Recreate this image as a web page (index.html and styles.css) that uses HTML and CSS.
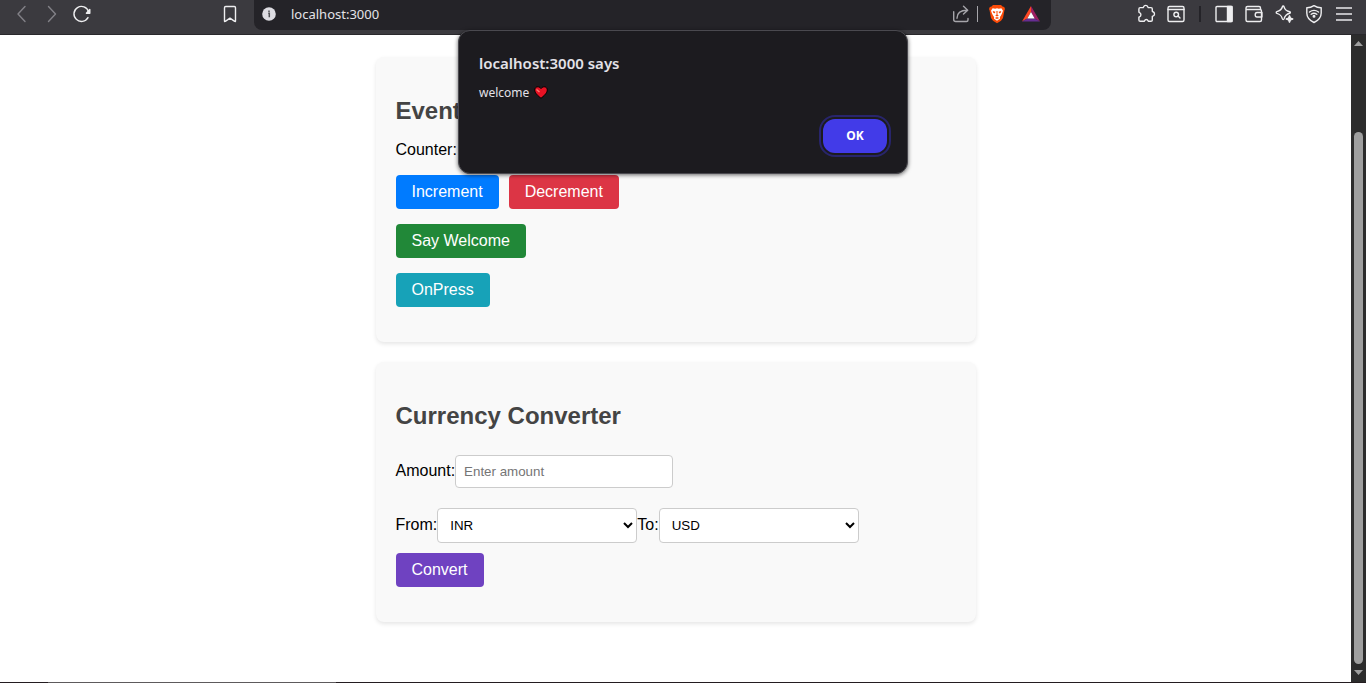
FILE: index.html
```html
<!DOCTYPE html>
<html lang="en">
<head>
<meta charset="utf-8">
<title>localhost:3000</title>
<link rel="stylesheet" href="styles.css">
</head>
<body>
<header class="toolbar">
  <div class="nav-group">
    <button class="tool dim" aria-label="Back"><svg width="20" height="20" viewBox="0 0 20 20"><path d="M13 2.500 6 10l7 7.500"/></svg></button>
    <button class="tool dim" aria-label="Forward"><svg width="20" height="20" viewBox="0 0 20 20"><path d="m6.500 2.500 7 7.500-7 7.500"/></svg></button>
    <button class="tool" aria-label="Reload"><svg width="20" height="20" viewBox="0 0 20 20"><path d="M16 13.600A7.500 7.500 0 1 1 16.600 7.600"/><path class="fill" d="M17.800 5.500v3.700h-3.400z"/></svg></button>
    <button class="tool bookmark" aria-label="Bookmark"><svg width="20" height="20" viewBox="0 0 20 20"><path d="M5.700 2.500h8.600q1.200 0 1.200 1.200v13.200q0 1-.8.400L10 14.200l-4.700 3.100q-.8.600-.8-.4V3.700q0-1.200 1.200-1.200z"/></svg></button>
  </div>
  <div class="address">
    <svg class="info" width="14" height="14" viewBox="0 0 14 14"><circle cx="7" cy="7" r="6.800" fill="#dddce2"/><path d="M6.200 6.200h1.100v4M7 3.500v1.400" stroke="#505055" stroke-width="1.500" fill="none"/></svg>
    <span class="url">localhost:3000</span>
    <button class="tool share" aria-label="Share"><svg width="20" height="20" viewBox="0 0 20 20"><path d="M2.700 7.800v7.700q0 2 2 2h10.800q1.500 0 1.500-1.500v-1.500M6 14.200c0-5 2.500-8 10.200-8M12.500 2.300l4.200 3.900-4.200 3.900"/></svg></button>
    <span class="divider"></span>
    <button class="tool" aria-label="Shields"><svg width="20" height="20" viewBox="0 0 20 20"><path class="solid" fill="#fb4b08" d="m6 1-1.500 1.500-1.700.5-.8 2 .6 1.500L4 14l2 2.700 4 2.600 4-2.600 2-2.700 1.400-7.500L18 5l-.8-2-1.700-.5L14 1z"/><path class="solid" fill="#fff" d="m5.600 4.300 2.600.5L10 4.200l1.800.6 2.600-.5 1.600 2.500-1.100 3-1.200 2.300-.8 1 .1 1.600-3 2-3-2 .1-1.600-.8-1-1.200-2.300-1.100-3z"/><path class="solid" fill="#fb4b08" d="m5.700 7 2.700.8-.5 1.500-1.500-.4zm8.600 0-2.700.8.500 1.500 1.500-.4zM9.400 7h1.200l-.2 3.400 1.400 1-1.800 1.200-1.800-1.200 1.400-1zM7.800 14l2.200-1 2.200 1-2.200 1z"/></svg></button>
    <button class="tool rewards" aria-label="Rewards"><svg width="20" height="20" viewBox="0 0 20 20"><path class="solid" fill="#ff4724" d="M10 2 1 17.500l5.300-3L10 8z"/><path class="solid" fill="#9e1f63" d="m10 2 9 15.500-5.300-3L10 8z"/><path class="solid" fill="#662d91" d="M1 17.500h18l-5.300-3.100H6.300z"/><path class="solid" fill="#fff" d="m10 8-3.700 6.400h7.400z"/></svg></button>
  </div>
  <div class="actions">
    <button class="tool" aria-label="Extensions"><svg width="20" height="20" viewBox="0 0 20 20"><path d="M4.200 3.600h3c.5-.3.300-2.200 2.500-2.200s2 1.900 2.500 2.200h2.800q1.300 0 1.300 1.300v2.500c.3.500 2.200.3 2.200 2.500s-1.900 2-2.200 2.500v3.500q0 1.300-1.300 1.300h-2.700c-.4-.3-.2-1.700-2-1.700s-1.600 1.400-2 1.700H4.200q-1.300 0-1.300-1.300v-2.700c.3-.5 2-.3 2-2.500s-1.700-2-2-2.500V4.900q0-1.300 1.300-1.300z"/></svg></button>
    <button class="tool" aria-label="Search tabs"><svg width="20" height="20" viewBox="0 0 20 20"><rect x="2" y="2.500" width="16" height="15" rx="1.500"/><path d="M2 5.500h16m-6 6.500 2 2"/><circle cx="10.200" cy="10.500" r="2.300"/></svg></button>
    <span class="separator"></span>
    <button class="tool" aria-label="Sidebar"><svg width="20" height="20" viewBox="0 0 20 20"><rect x="2" y="2.500" width="16" height="15" rx="1"/><path class="fill" d="M13.500 2.500H18v15h-4.500z"/></svg></button>
    <button class="tool" aria-label="Wallet"><svg width="20" height="20" viewBox="0 0 20 20"><path d="M16.500 5.500V4q0-1.500-1.500-1.500H3.500Q2 2.500 2 4v12q0 1.500 1.500 1.500H16q1.500 0 1.500-1.500V7q0-1.500-1.500-1.500H2M18 8.500h-5q-1.800 0-1.800 2.200t1.800 2.300h5z"/></svg></button>
    <button class="tool" aria-label="Assistant"><svg width="20" height="20" viewBox="0 0 20 20"><path d="M9.200 2q.6 0 .8.700c.9 3 1.800 4 5.700 5 .9.300.9 1.300 0 1.600-3.500.9-4.700 2-5.700 5.600-.3.900-1.300.9-1.600 0-.9-3.500-1.900-4.600-5.500-5.600-.9-.3-.9-1.300 0-1.600 3.500-1 4.600-2 5.500-5q.2-.7.800-.7z"/><path class="fill" d="m15.500 11.800.9 2.300 2.300.9-2.300.9-.9 2.300-.9-2.300-2.300-.9 2.300-.9z"/></svg></button>
    <button class="tool" aria-label="VPN"><svg width="20" height="20" viewBox="0 0 20 20"><path d="M10 1.600q3.500 2.300 7.200 2.200V9c0 5-3.200 7.600-7.200 9.500C6 16.600 2.800 14 2.800 9V3.800Q6.500 3.900 10 1.600zM5.500 8q4.500-3.200 9 0m-7.300 2.300q2.800-2 5.600 0"/><circle class="fill" cx="10" cy="12.300" r=".8"/></svg></button>
    <button class="tool menu" aria-label="Menu"><svg width="20" height="20" viewBox="0 0 20 20"><path d="M2 4h16M2 10h16M2 16h16"/></svg></button>
  </div>
</header>
<div class="viewport">
  <main class="page">
    <section class="card">
      <h2 class="heading">Event</h2>
      <p class="counter">Counter:</p>
      <div class="row"><button class="btn blue">Increment</button><button class="btn red">Decrement</button></div>
      <div class="row"><button class="btn green">Say Welcome</button></div>
      <div class="row"><button class="btn teal">OnPress</button></div>
    </section>
    <section class="card">
      <h2 class="heading converter">Currency Converter</h2>
      <form>
        <div class="field amount"><label for="amount">Amount:</label><input class="input" id="amount" type="text" placeholder="Enter amount"></div>
        <div class="field units"><label for="from">From:</label><select class="select" id="from"><option>INR</option></select><label for="to">To:</label><select class="select" id="to"><option>USD</option></select></div>
        <div class="row"><button class="btn purple" type="button">Convert</button></div>
      </form>
    </section>
  </main>
  <div class="scrollbar">
    <svg width="9" height="5" viewBox="0 0 9 5"><path d="M4.500 0 9 5H0z"/></svg>
    <div class="track"><div class="thumb"></div></div>
    <svg width="9" height="5" viewBox="0 0 9 5"><path d="M0 0h9L4.500 5z"/></svg>
  </div>
</div>
<div class="edge"></div>
<div class="dialog" role="alertdialog" aria-labelledby="dialog-title">
  <h1 class="dialog-title" id="dialog-title">localhost:3000 says</h1>
  <p class="dialog-text">welcome <svg width="14" height="13" viewBox="0 0 14 13"><path d="M7 12.300C4 9.800.7 7 .7 4 .7 .5 5-.4 7 2.600c2-3 6.300-2.100 6.300 1.400 0 3-3.300 5.800-6.300 8.300z" fill="#e81224" stroke="#000"/><path d="M2.500 3.500 5.500 6" stroke="#ff7b72" stroke-width="1.300"/></svg></p>
  <button class="ok">OK</button>
</div>
</body>
</html>
```
FILE: styles.css
```css
* { box-sizing: border-box; }
body {
  margin: 0;
  min-height: 100vh;
  display: flex;
  flex-direction: column;
  position: relative;
  background: #fff;
  color: #000;
  font: 16px/18px "Liberation Sans", Arial, sans-serif;
}
button { border: 0; font: inherit; cursor: pointer; }
h1, h2, p { margin: 0; }

.toolbar {
  display: flex;
  align-items: flex-start;
  height: 35px;
  background: #3b3a3f;
  border-bottom: 1px solid #29282c;
}
.nav-group { display: flex; width: 254px; padding: 0 9px 0 7px; }
.bookmark { margin-left: auto; }
.tool {
  display: flex;
  align-items: center;
  justify-content: center;
  width: 30px;
  height: 28px;
  padding: 0;
  background: none;
  color: #eeeef0;
}
.tool svg { fill: none; stroke: currentColor; stroke-width: 1.4; stroke-linejoin: round; stroke-linecap: round; }
.tool .fill { fill: currentColor; }
.tool .solid { stroke: none; }
.dim { color: #828187; }
.menu { color: #bdbcc0; }
.menu svg { stroke-width: 2; stroke-linecap: butt; }
.address {
  flex: 1;
  display: flex;
  align-items: center;
  height: 30px;
  padding: 0 5px 2px 8px;
  background: #242328;
  border-radius: 0 0 8px 8px;
}
.url { flex: 1; margin-left: 15px; color: #e4e3e8; font: 13px/18px "Noto Sans", sans-serif; }
.share { color: #a6a5aa; }
.divider { width: 1px; height: 16px; margin: 0 4px 0 1px; background: #a6a5aa; }
.rewards { margin-left: 4px; }
.actions { display: flex; align-items: center; justify-content: flex-end; width: 315px; padding-right: 7px; }
.separator { width: 2px; height: 16px; margin: 0 8px; background: #242328; }

.viewport { flex: 1; display: flex; }
.page { flex: 1; padding: 22px 20px 0; }
.card {
  max-width: 600px;
  margin: 0 auto 20px;
  padding: 40px 20px 20px;
  background: #f9f9f9;
  border-radius: 8px;
  box-shadow: 0 2px 4px rgba(0, 0, 0, .1);
}
.heading { color: #444; font-size: 24px; line-height: 28px; }
.converter { margin-bottom: 25px; }
.counter { margin: 16px 0; }
.row { display: flex; gap: 10px; margin-bottom: 15px; }
.btn { padding: 8px 16px; color: #fff; border-radius: 4px; }
.blue { background: #007bff; }
.red { background: #dc3545; }
.green { background: #218838; }
.teal { background: #17a2b8; }
.purple { background: #6f42c1; }
.field { display: flex; align-items: baseline; }
.amount { margin-bottom: 20px; }
.units { margin-bottom: 10px; }
.input, .select { background: #fff; color: #000; border: 1px solid #ccc; border-radius: 4px; padding: 8px; }
.input { width: 218px; height: 33px; }
.select { width: 200px; height: 35px; }

.scrollbar {
  display: flex;
  flex-direction: column;
  align-items: center;
  gap: 6px;
  width: 15px;
  padding: 6px 0 7px;
  background: #2c2c2c;
}
.scrollbar svg { fill: #9f9f9f; }
.track { flex: 1; display: flex; flex-direction: column; justify-content: flex-end; width: 9px; }
.thumb { height: 87%; border-radius: 5px; background: #9f9f9f; }
.edge { height: 1px; background: linear-gradient(90deg, #231c20 48px, #5d5a5c 48px 336px, #231c20 336px); }

.dialog {
  position: absolute;
  top: 30px;
  left: calc(50% - 225px);
  width: 450px;
  display: flex;
  flex-direction: column;
  padding: 22px 20px 20px;
  background: #1c1b1f;
  border: 1px solid #4a494f;
  border-radius: 12px;
  box-shadow: 0 1px 4px rgba(0, 0, 0, .6);
  color: #e3e2e8;
  font: 13px/18px "Noto Sans", sans-serif;
}
.dialog-title { font-size: 15px; line-height: 20px; font-weight: 600; }
.dialog-text { margin: 11px 0 17px; font-size: 12px; }
.dialog-text svg { margin-left: 2px; vertical-align: -2px; fill: none; }
.ok {
  align-self: flex-end;
  width: 64px;
  height: 34px;
  background: #423be8;
  color: #fff;
  border-radius: 12px;
  font-size: 12px;
  font-weight: 700;
  outline: 2px solid #28256c;
  outline-offset: 2px;
}
```
